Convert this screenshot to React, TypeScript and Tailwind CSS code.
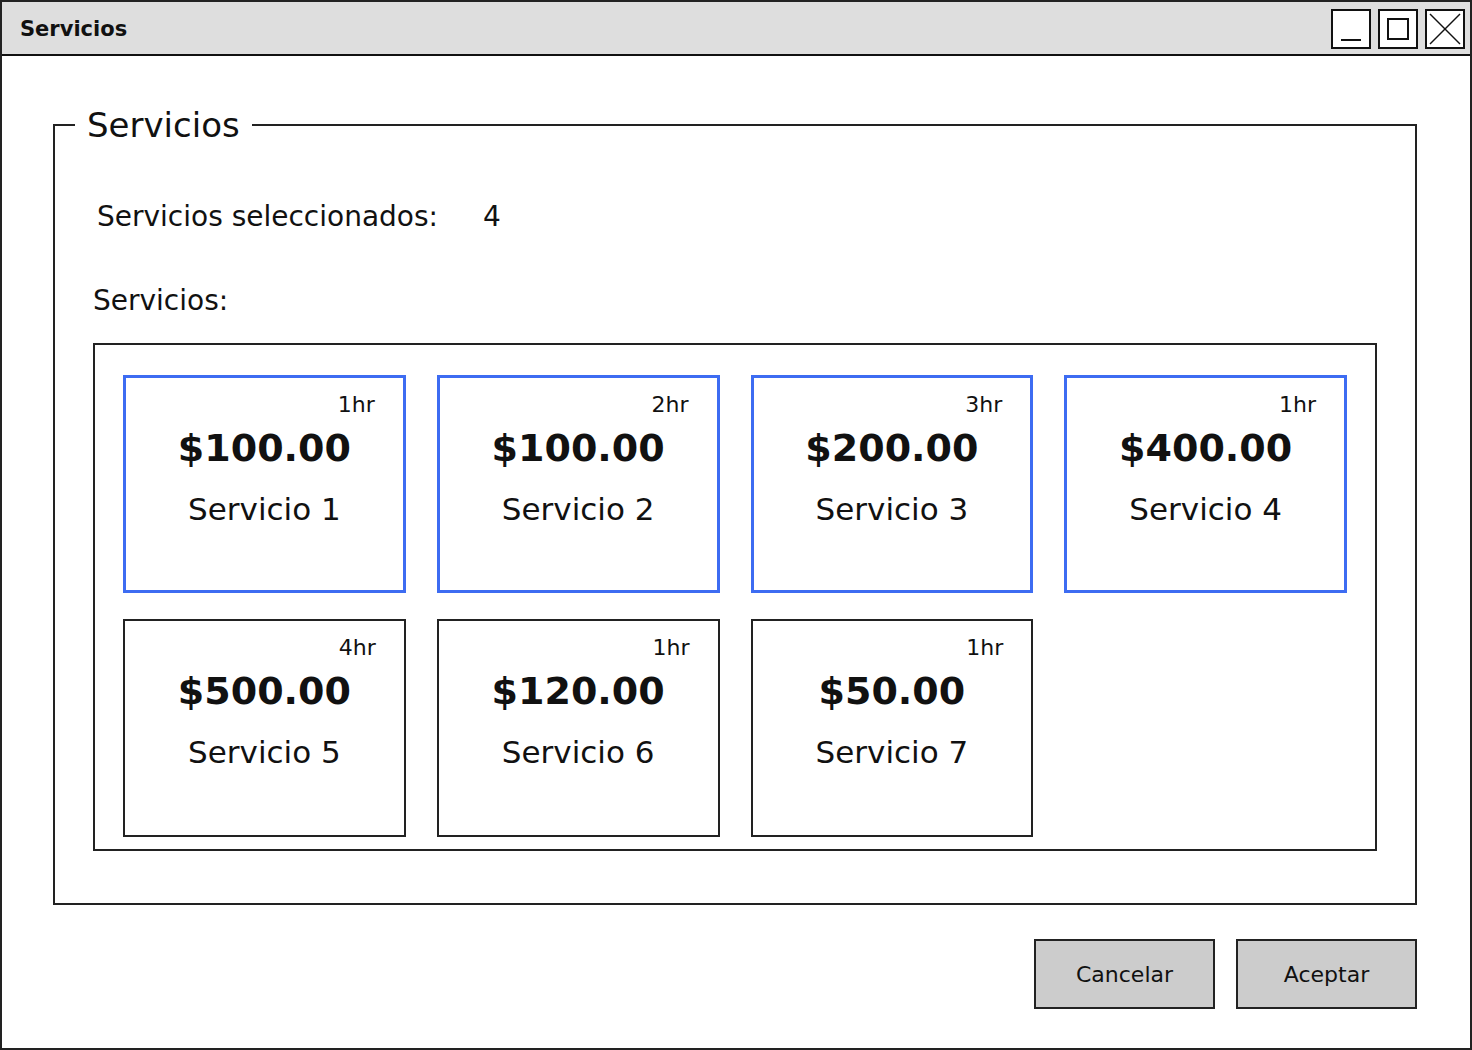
import React from 'react';

const services = [
  { price: '$100.00', name: 'Servicio 1', hr: '1hr', selected: true },
  { price: '$100.00', name: 'Servicio 2', hr: '2hr', selected: true },
  { price: '$200.00', name: 'Servicio 3', hr: '3hr', selected: true },
  { price: '$400.00', name: 'Servicio 4', hr: '1hr', selected: true },
  { price: '$500.00', name: 'Servicio 5', hr: '4hr', selected: false },
  { price: '$120.00', name: 'Servicio 6', hr: '1hr', selected: false },
  { price: '$50.00', name: 'Servicio 7', hr: '1hr', selected: false },
];

function WinButton({ kind }: { kind: 'min' | 'max' | 'close' }) {
  return (
    <div className="w-[40px] h-[40px] border-2 border-[#111] bg-white">
      <svg width="36" height="36" viewBox="0 0 36 36" className="block">
        {kind === 'min' && <line x1="8" y1="29" x2="28" y2="29" stroke="#111" strokeWidth="2" />}
        {kind === 'max' && <rect x="8" y="8" width="20" height="20" fill="none" stroke="#111" strokeWidth="2" />}
        {kind === 'close' && (
          <>
            <line x1="3" y1="3" x2="33" y2="33" stroke="#111" strokeWidth="1.5" />
            <line x1="33" y1="3" x2="3" y2="33" stroke="#111" strokeWidth="1.5" />
          </>
        )}
      </svg>
    </div>
  );
}

function ServiceCard({ s }: { s: (typeof services)[number] }) {
  return (
    <div
      className={`h-[218px] flex flex-col bg-white ${s.selected ? 'border-[3px] border-[#3d6cf2]' : 'border-2 border-[#222]'}`}
    >
      <div className="pt-[15px] pr-[28px] text-right text-[22px] leading-[24px]">{s.hr}</div>
      <div className="mt-[7px] text-center text-[38px] leading-[48px] font-bold">{s.price}</div>
      <div className="mt-[19px] text-center text-[31px] leading-[36px]">{s.name}</div>
    </div>
  );
}

export default function App() {
  return (
    <div className="w-[1472px] h-[1050px] border-2 border-[#222] bg-white text-[#111] font-['Comic_Sans_MS','DejaVu_Sans',sans-serif] flex flex-col">
      {/* Title bar */}
      <div className="h-[54px] bg-[#dedede] border-b-2 border-[#111] flex items-center justify-between pl-[18px] pr-[5px]">
        <span className="pt-[4px] text-[21px] font-bold">Servicios</span>
        <div className="flex gap-[7px] pt-[2px]">
          <WinButton kind="min" />
          <WinButton kind="max" />
          <WinButton kind="close" />
        </div>
      </div>

      <div className="pl-[51px] pr-[53px]">
        <fieldset className="mt-[51px] border-2 border-[#222] px-[38px] pb-[52px]">
          <legend className="ml-[-18px] px-[12px] text-[34px] leading-[36px]">Servicios</legend>

          <div className="mt-[56px] h-[36px] flex items-center text-[28px] pl-[4px]">
            <span className="w-[386px]">Servicios seleccionados:</span>
            <span>4</span>
          </div>

          <div className="mt-[48px] h-[36px] flex items-center text-[28px]">Servicios:</div>

          <div className="mt-[24px] h-[508px] border-2 border-[#222] px-[28px] pt-[30px]">
            <div className="grid grid-cols-4 gap-x-[31px] gap-y-[26px]">
              {services.map((s) => (
                <ServiceCard key={s.name} s={s} />
              ))}
            </div>
          </div>
        </fieldset>

        <div className="mt-[34px] flex justify-end gap-[21px]">
          <button className="w-[181px] h-[70px] bg-[#cccccc] border-2 border-[#222] text-[22px]">Cancelar</button>
          <button className="w-[181px] h-[70px] bg-[#cccccc] border-2 border-[#222] text-[22px]">Aceptar</button>
        </div>
      </div>
    </div>
  );
}
